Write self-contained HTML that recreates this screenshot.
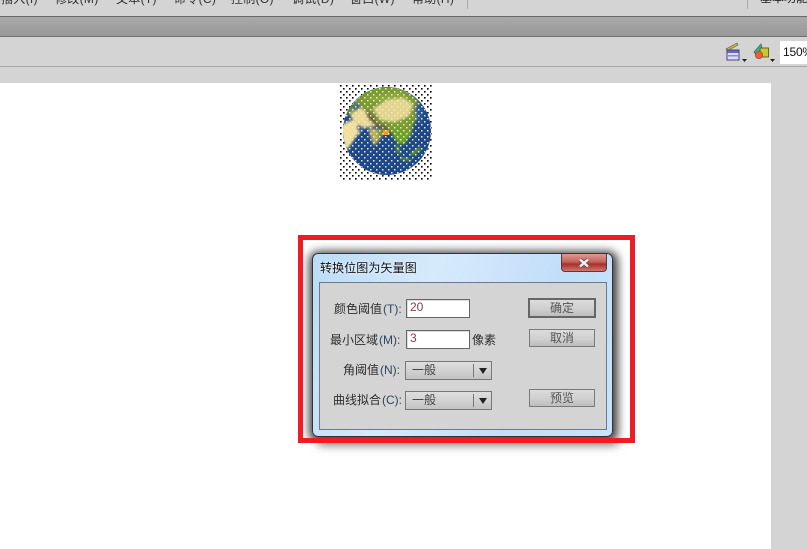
<!DOCTYPE html>
<html>
<head>
<meta charset="utf-8">
<style>
html,body{margin:0;padding:0;width:807px;height:549px;overflow:hidden;background:#fff;font-family:"Liberation Sans","Noto Sans CJK SC",sans-serif;font-size:12px;color:#222}
.a{position:absolute}
.t{position:absolute;white-space:nowrap;line-height:14px}
.lbl{color:#2e2e2e;font-size:12px}
.lbl span{color:#2f4660;font-size:12px;margin-left:1px}
.inp{position:absolute;width:62px;height:17px;background:#fff;border:1px solid #666;box-shadow:inset 1px 1px 0 #ddd;color:#8a3a4a;font-size:12px;line-height:15px;text-indent:3px}
.btn{position:absolute;box-sizing:border-box;background:linear-gradient(#dcdcdc,#cfcfcf 55%,#bdbdbd);border:1px solid #7a7a7a;text-align:center;color:#555;font-size:12px;line-height:17px}
.sel{position:absolute;left:405px;width:85px;height:17px;box-sizing:content-box;border:1px solid #777;background:linear-gradient(#dedede,#cfcfcf 60%,#c2c2c2);color:#444;font-size:12px;line-height:17px;text-indent:6px}
.sel i{position:absolute;left:67px;top:2px;width:1px;height:13px;background:#777}
.sel b{position:absolute;left:73px;top:6px;width:0;height:0;border-left:4px solid transparent;border-right:4px solid transparent;border-top:6px solid #222}
</style>
</head>
<body>
<div class="a" style="left:0;top:0;width:807px;height:83px;background:#d4d4d4"></div>
<div class="a" style="left:771px;top:83px;width:36px;height:466px;background:#d4d4d4"></div>
<div class="a" style="left:0;top:16px;width:807px;height:1px;background:#6a6a6a"></div>
<div class="a" style="left:0;top:17px;width:807px;height:19px;background:linear-gradient(#a9a9a9,#989898)"></div>
<div class="a" style="left:0;top:36px;width:807px;height:1px;background:#707070"></div>
<div class="a" style="left:0;top:66px;width:807px;height:1px;background:#a6a6a6"></div>
<div class="a" style="left:467px;top:0;width:1px;height:9px;background:#aaa"></div>
<div class="a" style="left:747px;top:0;width:1px;height:9px;background:#aaa"></div>

<div class="t" style="left:1px;top:-8px;color:#333;letter-spacing:.3px">插入(I)</div>
<div class="t" style="left:55px;top:-8px;color:#333;letter-spacing:.3px">修改(M)</div>
<div class="t" style="left:116px;top:-8px;color:#333;letter-spacing:.3px">文本(T)</div>
<div class="t" style="left:174px;top:-8px;color:#333;letter-spacing:.3px">命令(C)</div>
<div class="t" style="left:231px;top:-8px;color:#333;letter-spacing:.3px">控制(O)</div>
<div class="t" style="left:292px;top:-8px;color:#333;letter-spacing:.3px">调试(D)</div>
<div class="t" style="left:350px;top:-8px;color:#333;letter-spacing:.3px">窗口(W)</div>
<div class="t" style="left:412px;top:-8px;color:#333;letter-spacing:.3px">帮助(H)</div>
<div class="t" style="left:760px;top:-9px;color:#222">基本功能</div>

<svg class="a" style="left:724px;top:40px" width="60" height="24" viewBox="0 0 60 24">
  <path d="M2 9 L13 3 L14 5 L3 11Z" fill="#c8b83c" stroke="#555" stroke-width=".6"/>
  <rect x="3" y="10" width="12" height="10" fill="#dcdcf4" stroke="#454585"/>
  <rect x="3.500" y="10.500" width="11" height="2.500" fill="#6a6ab8"/>
  <rect x="4" y="15" width="10" height="1.500" fill="#8a8ad0"/>
  <path d="M18 19h5l-2.500 3z" fill="#222"/>
  <path d="M30 12 L37 4 L40 15 L32 15Z" fill="#3cb48c" stroke="#2a6a5a" stroke-width=".7"/>
  <rect x="36" y="8" width="8.500" height="9" fill="#c8c832" stroke="#66661a"/>
  <circle cx="35" cy="15" r="3.700" fill="#e8603a" stroke="#a8402a" stroke-width=".7"/>
  <path d="M46 19h5l-2.500 3z" fill="#222"/>
</svg>
<div class="a" style="left:780px;top:41px;width:27px;height:23px;background:#fff"></div>
<div class="t" style="left:783px;top:45px;color:#111;font-size:12px;letter-spacing:-.2px">150%</div>

<svg class="a" style="left:339px;top:84px" width="93" height="96" viewBox="0 0 93 96">
  <defs>
    <pattern id="bk" width="6" height="6" patternUnits="userSpaceOnUse">
      <rect x="1" y="1" width="1.600" height="1.600" fill="#000"/>
      <rect x="4" y="4" width="1.600" height="1.600" fill="#000"/>
    </pattern>
    <pattern id="wh" width="6" height="6" patternUnits="userSpaceOnUse">
      <rect x="1" y="1" width="1.500" height="1.500" fill="#efe9cc"/>
      <rect x="4" y="4" width="1.500" height="1.500" fill="#efe9cc"/>
    </pattern>
    <clipPath id="c"><circle cx="48" cy="47" r="44"/></clipPath>
    <filter id="f" x="-20%" y="-20%" width="140%" height="140%"><feGaussianBlur stdDeviation="1.200"/></filter>
  </defs>
  <rect width="93" height="96" fill="#fff"/>
  <rect width="93" height="96" fill="url(#bk)"/>
  <circle cx="48" cy="47" r="44" fill="#1c4788"/>
  <g clip-path="url(#c)">
    <g filter="url(#f)">
      <path d="M8 28 L22 10 L36 3 L62 2 L79 16 L80 30 L74 42 L72 52 L62 60 L56 52 L46 44 L28 42 L14 36Z" fill="#7a9a32"/>
      <path d="M24 14 L40 12 L60 8 L70 14 L60 16 L40 18 Z" fill="#8aa83a"/>
      <path d="M34 25 L48 16 L64 14 L74 20 L70 32 L56 38 L42 36Z" fill="#e4d58c"/>
      <path d="M12 30 L22 24 L32 32 L36 42 L24 44 L18 52 Z" fill="#ecda94"/>
      <path d="M1 42 L12 36 L22 44 L16 54 L8 66 L3 56Z" fill="#f2e09a"/>
      <path d="M26 26 L33 30 L38 38 L50 43 L46 46 L36 42 L29 35Z" fill="#6f6444"/>
      <path d="M29 44 L46 46 L42 54 L35 62 L32 54Z" fill="#bcae62"/>
      <path d="M38 46 L46 46 L40 56Z" fill="#7c9a38"/>
      <path d="M54 44 L72 48 L66 60 L60 60 L54 53Z" fill="#6da426"/>
      <path d="M56 60 L60 62 L62 71 L58 68Z" fill="#5c9a32"/>
      <path d="M61 73 L72 75 L72 77 L62 76Z" fill="#5c9a32"/>
      <path d="M71 69 L81 63 L82 66 L73 72Z" fill="#5c9a32"/>
      <path d="M64 90 L80 80 L84 84 L70 94Z" fill="#e8c88a"/>
      <path d="M14 22 L21 19 L20 25 L15 26Z" fill="#2a5a96"/>
      <path d="M18 41 L24 42 L22 48 L18 46Z" fill="#2a5a96"/>
      <path d="M76 20 L85 24 L82 42 L77 32Z" fill="#2a5a96"/>
    </g>
    <rect x="44" y="46" width="6" height="5" fill="#f09a18"/>
  </g>
  <circle cx="48" cy="47" r="44" fill="url(#wh)"/>
</svg>

<div class="a" style="left:318px;top:434px;width:300px;height:10px;background:#555;filter:blur(5px)"></div>
<div class="a" style="left:298px;top:235px;width:337px;height:208px;box-sizing:border-box;border:5px solid #ee1c25;background:#fff"></div>
<div class="a" style="left:303px;top:240px;width:327px;height:198px;overflow:hidden">
  <div class="a" style="left:9px;top:13px;width:301px;height:184px;box-sizing:border-box;border:1px solid #333;border-radius:6px;background:linear-gradient(110deg,#b9dcf6,#d6eafc 35%,#c2defa 70%,#c8e2fb);box-shadow:1px 2px 9px 4px #444"></div>
</div>
<div class="a" style="left:319px;top:282px;width:288px;height:148px;box-sizing:border-box;border:1px solid #6a7a88;background:#d4d4d4"></div>
<div class="a" style="left:561px;top:254px;width:46px;height:18px;box-sizing:border-box;border:1px solid #5a3a3a;border-top:none;border-radius:0 0 4px 4px;background:linear-gradient(#dd9a94,#c8645c 45%,#a83028 60%,#c87a70)"></div>
<svg class="a" style="left:577px;top:257px" width="14" height="12" viewBox="0 0 14 12"><path d="M3 2.500 L11 9.500 M11 2.500 L3 9.500" stroke="#555" stroke-width="4"/><path d="M3 2.500 L11 9.500 M11 2.500 L3 9.500" stroke="#f2f2f2" stroke-width="2.400"/></svg>

<div class="t" style="left:320px;top:261px;color:#111;font-size:12px;text-shadow:0 0 3px #fff;letter-spacing:.1px">转换位图为矢量图</div>

<div class="t lbl" style="left:334px;top:302px">颜色阈值<span>(T):</span></div>
<div class="inp" style="left:406px;top:299px">20</div>
<div class="t lbl" style="left:330px;top:333px">最小区域<span>(M):</span></div>
<div class="inp" style="left:406px;top:330px">3</div>
<div class="t lbl" style="left:472px;top:333px">像素</div>
<div class="t lbl" style="left:343px;top:363px">角阈值<span>(N):</span></div>
<div class="sel" style="top:361px">一般<i></i><b></b></div>
<div class="t lbl" style="left:333px;top:393px">曲线拟合<span>(C):</span></div>
<div class="sel" style="top:391px">一般<i></i><b></b></div>

<div class="btn" style="left:528px;top:298px;width:68px;height:20px;border:2px solid #666;line-height:17px">确定</div>
<div class="btn" style="left:529px;top:329px;width:66px;height:18px;line-height:16px">取消</div>
<div class="btn" style="left:529px;top:389px;width:66px;height:18px;line-height:16px">预览</div>
</body>
</html>
